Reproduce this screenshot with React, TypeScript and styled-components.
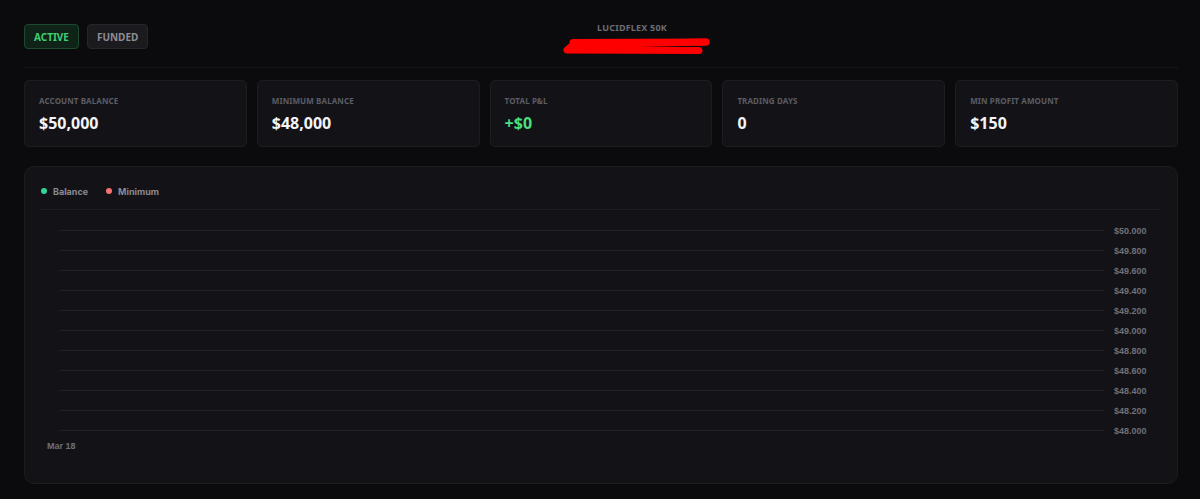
import React from "react";
import styled, { createGlobalStyle } from "styled-components";

const Global = createGlobalStyle`
  html, body { margin: 0; padding: 0; background: #0b0b0e; }
  body { font-family: "Noto Sans", "Open Sans", Arial, sans-serif; color: #f4f4f5; }
  * { box-sizing: border-box; }
`;

const Page = styled.div`
  width: 1200px;
  min-height: 499px;
  padding: 0 22px 0 24px;
  background: #0b0b0e;
`;

const Header = styled.header`
  height: 68px;
  padding-top: 6px;
  display: grid;
  grid-template-columns: 1fr auto 1fr;
  align-items: center;
  border-bottom: 1px solid #17171b;
`;

const Tabs = styled.div`
  display: flex;
  gap: 8px;
  align-items: center;
`;

const Tab = styled.button<{ $active?: boolean }>`
  height: 25px;
  padding: 0 9px;
  border-radius: 4px;
  font-family: "Noto Sans", Arial, sans-serif;
  font-size: 10px;
  font-weight: 700;
  cursor: pointer;
  background: ${(p) => (p.$active ? "#0f2318" : "#1b1b1f")};
  border: 1px solid ${(p) => (p.$active ? "#1d4a2e" : "#26262b")};
  color: ${(p) => (p.$active ? "#3fcf73" : "#8d8d94")};
`;

const TitleBlock = styled.div`
  display: flex;
  flex-direction: column;
  align-items: center;
  gap: 4px;
  margin-top: 4px;
  margin-left: 62px;
`;

const Title = styled.div`
  font-size: 9px;
  font-weight: 700;
  color: #6c6c73;
  letter-spacing: 0.2px;
  line-height: 12px;
`;

const Scribble = styled.svg`
  display: block;
  margin-left: 12px;
`;

const Stats = styled.div`
  display: grid;
  grid-template-columns: repeat(5, 1fr);
  gap: 10px;
  margin-top: 12px;
`;

const StatCard = styled.div`
  height: 67px;
  background: #131317;
  border: 1px solid #1c1c21;
  border-radius: 5px;
  padding: 14px 14px 0;
  display: flex;
  flex-direction: column;
  gap: 6px;
`;

const StatLabel = styled.div`
  font-size: 8px;
  font-weight: 700;
  color: #5c5c64;
  letter-spacing: 0.1px;
  line-height: 11px;
  text-transform: uppercase;
`;

const StatValue = styled.div<{ $green?: boolean }>`
  font-size: 16px;
  font-weight: 700;
  line-height: 22px;
  color: ${(p) => (p.$green ? "#4ade80" : "#f4f4f5")};
`;

const ChartCard = styled.section`
  margin-top: 19px;
  height: 318px;
  background: #131317;
  border: 1px solid #1c1c21;
  border-radius: 10px;
  padding: 16px 16px 0;
`;

const Legend = styled.div`
  display: flex;
  gap: 18px;
  height: 16px;
  align-items: center;
  margin-bottom: 10px;
  padding-left: 0;
`;

const LegendItem = styled.div`
  display: flex;
  align-items: center;
  gap: 6px;
  font-family: Inter, "Liberation Sans", Arial, sans-serif;
  font-size: 9px;
  font-weight: 700;
  color: #8a8a91;
`;

const Dot = styled.span<{ $color: string }>`
  width: 6px;
  height: 6px;
  border-radius: 50%;
  background: ${(p) => p.$color};
`;

const ChartSvg = styled.svg`
  display: block;
  font-family: "Liberation Sans", Arial, sans-serif;
`;

const ticks = [50000, 49800, 49600, 49400, 49200, 49000, 48800, 48600, 48400, 48200, 48000];
const fmt = (n: number) => "$" + n.toLocaleString("en-US").replace(",", ".");

export default function App() {
  return (
    <>
      <Global />
      <Page>
        <Header>
          <Tabs>
            <Tab $active>ACTIVE</Tab>
            <Tab>FUNDED</Tab>
          </Tabs>
          <TitleBlock>
            <Title>LUCIDFLEX 50K</Title>
            <Scribble width="150" height="18" viewBox="0 0 150 18">
              <path d="M10 4.5 L143 4" stroke="#ff0000" strokeWidth="7" strokeLinecap="round" fill="none" />
              <path d="M143 4 L10 7 L4 12 L136 12.5" stroke="#ff0000" strokeWidth="7" strokeLinecap="round" strokeLinejoin="round" fill="none" />
            </Scribble>
          </TitleBlock>
          <div />
        </Header>
        <Stats>
          <StatCard>
            <StatLabel>Account Balance</StatLabel>
            <StatValue>$50,000</StatValue>
          </StatCard>
          <StatCard>
            <StatLabel>Minimum Balance</StatLabel>
            <StatValue>$48,000</StatValue>
          </StatCard>
          <StatCard>
            <StatLabel>Total P&amp;L</StatLabel>
            <StatValue $green>+$0</StatValue>
          </StatCard>
          <StatCard>
            <StatLabel>Trading Days</StatLabel>
            <StatValue>0</StatValue>
          </StatCard>
          <StatCard>
            <StatLabel>Min Profit Amount</StatLabel>
            <StatValue>$150</StatValue>
          </StatCard>
        </Stats>
        <ChartCard>
          <Legend>
            <LegendItem>
              <Dot $color="#34d399" />
              Balance
            </LegendItem>
            <LegendItem>
              <Dot $color="#f87171" />
              Minimum
            </LegendItem>
          </Legend>
          <ChartSvg width="1120" height="250" viewBox="0 0 1120 250">
            <line x1="0" x2="1120" y1="0.5" y2="0.5" stroke="#1e1e23" strokeWidth="1" />
            {ticks.map((t, i) => {
              const y = 21.5 + i * 20;
              return (
                <g key={t}>
                  <line x1="18" x2="1063" y1={y} y2={y} stroke="#202026" strokeWidth="1" />
                  <text x="1073" y={y + 3.5} fontSize="9" fontWeight="700" fill="#707077">
                    {fmt(t)}
                  </text>
                </g>
              );
            })}
            <text x="6" y="240" fontSize="9" fontWeight="700" fill="#707077">
              Mar 18
            </text>
          </ChartSvg>
        </ChartCard>
      </Page>
    </>
  );
}
